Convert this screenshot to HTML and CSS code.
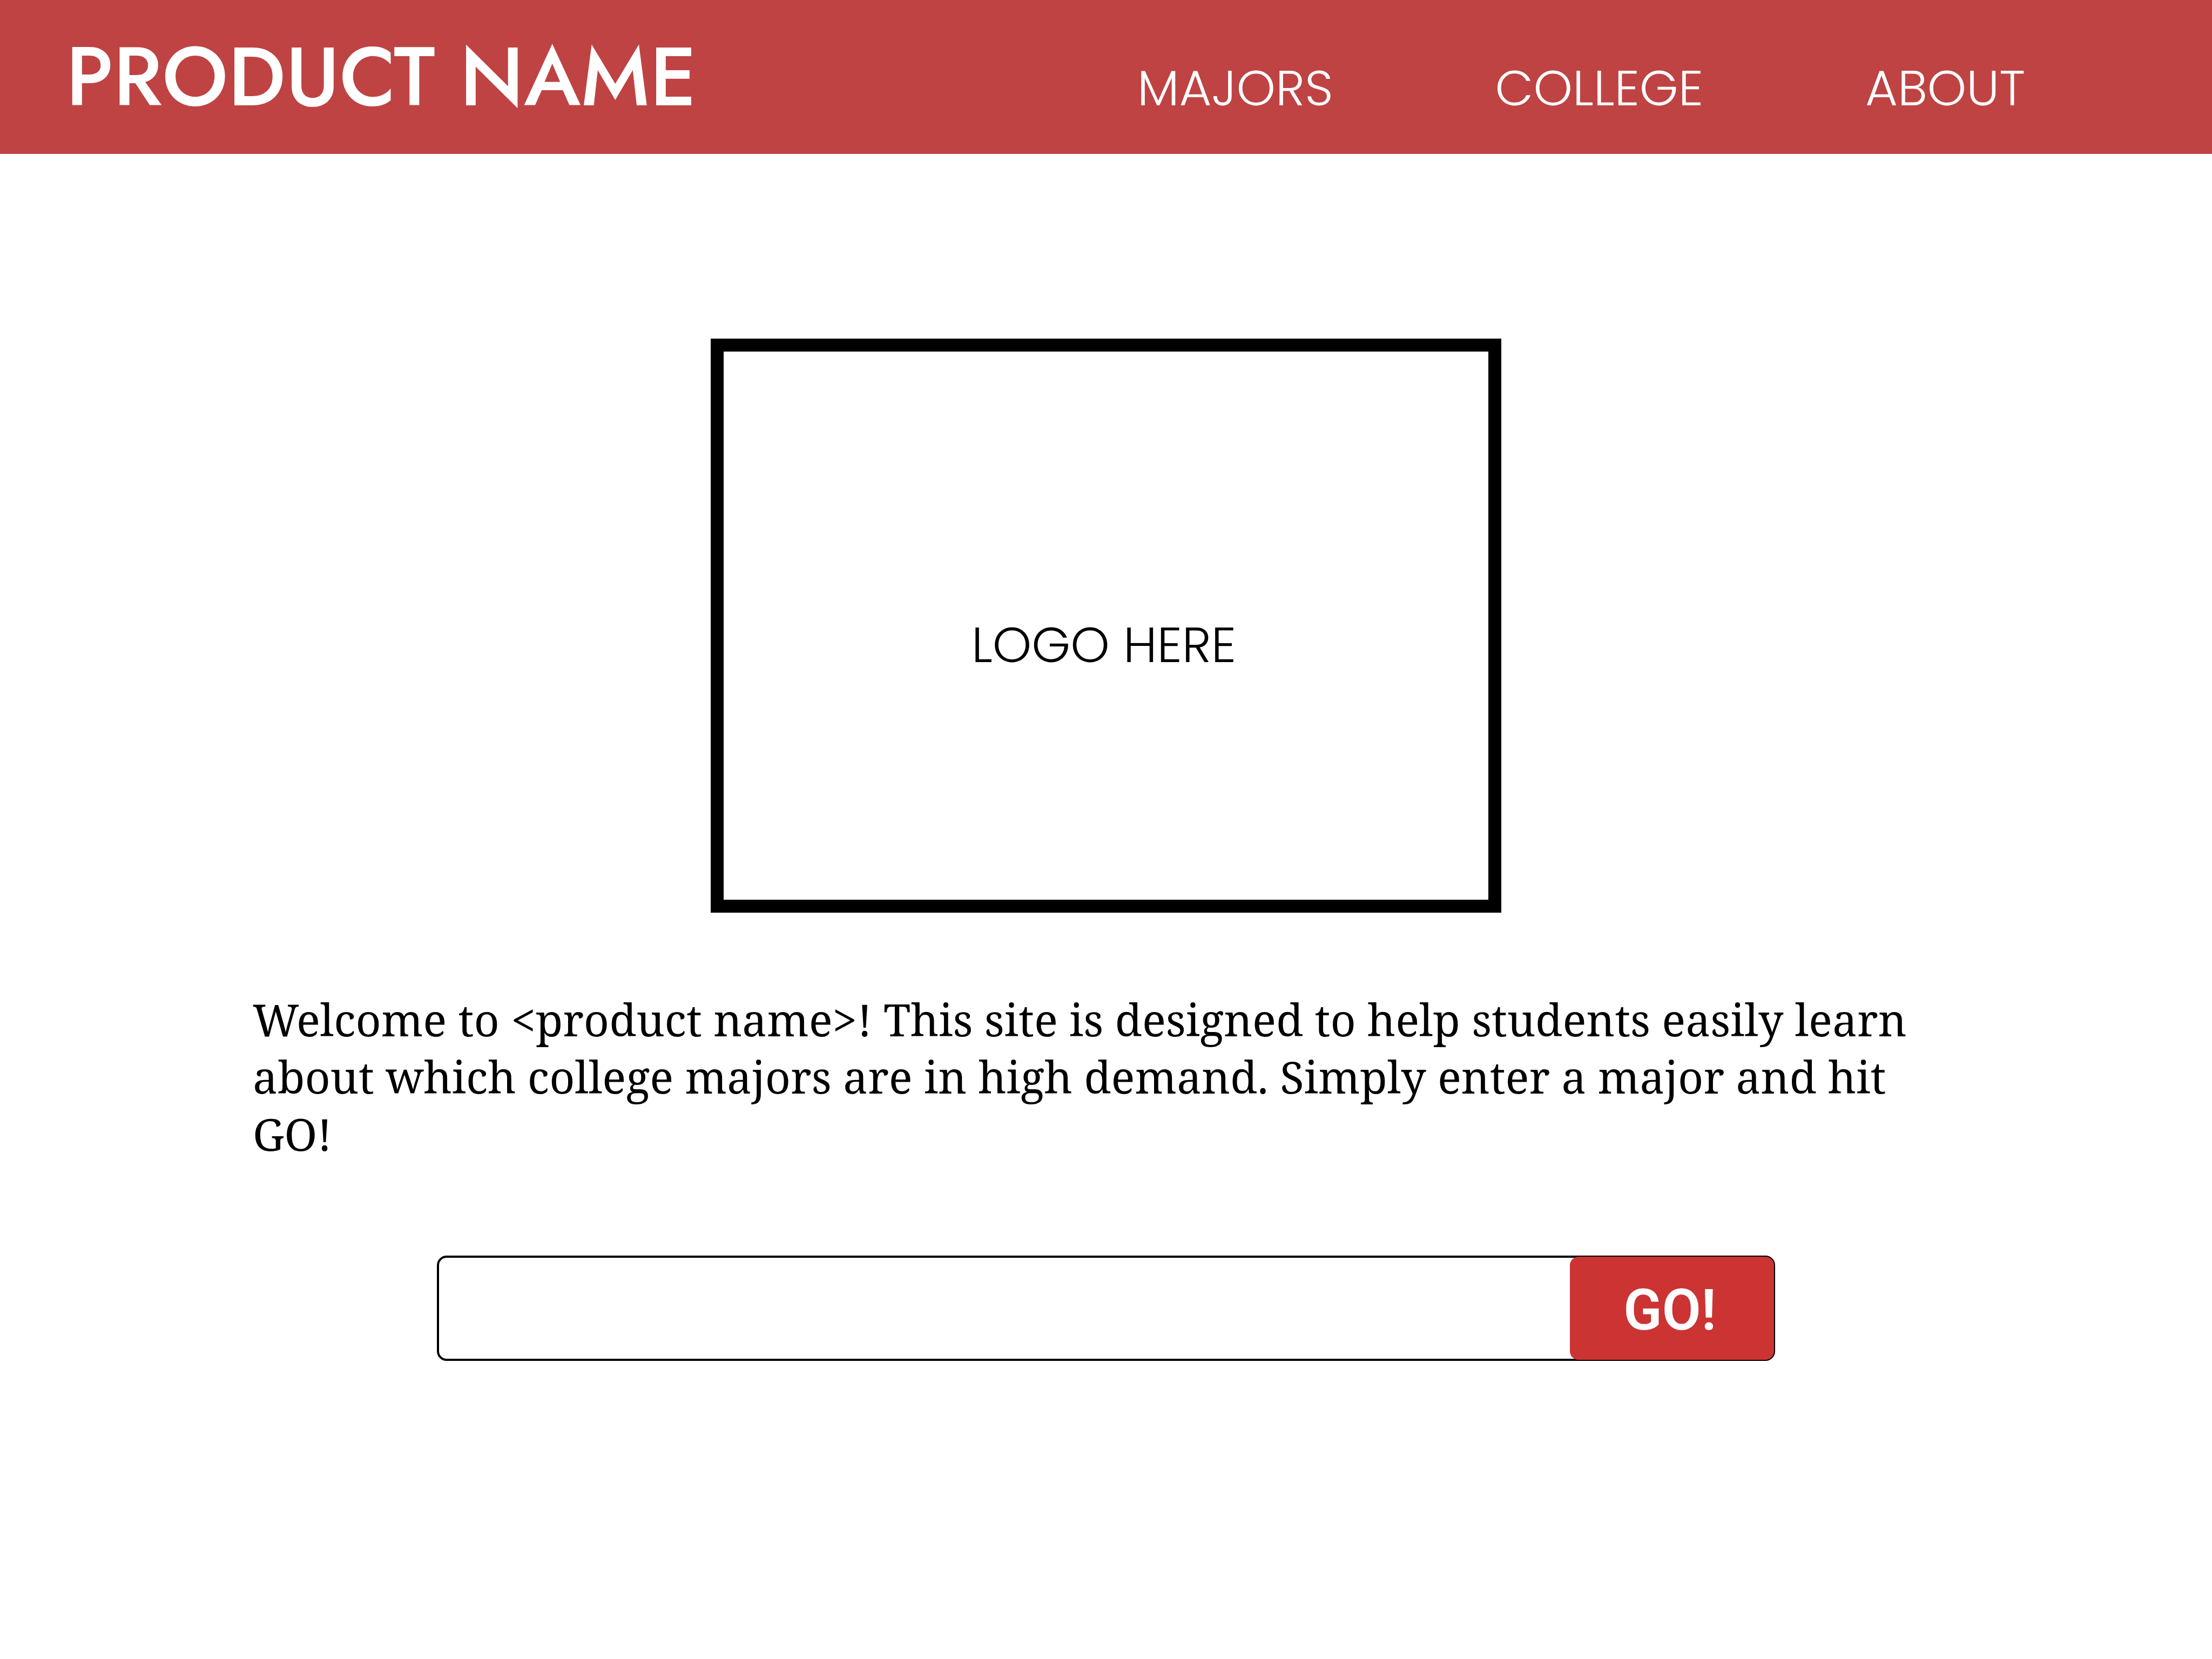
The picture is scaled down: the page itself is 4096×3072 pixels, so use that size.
FILE: index.html
```html
<!DOCTYPE html>
<html lang="en">
<head>
  <meta charset="utf-8">
  <meta name="viewport" content="width=device-width, initial-scale=1">
  <title>Product Name</title>
  <link rel="stylesheet" href="styles.css">
</head>
<body>
  <header class="site-header">
    <h1 class="brand">PRODUCT NAME</h1>
    <nav class="site-nav">
      <a class="nav-link" href="#majors">MAJORS</a>
      <a class="nav-link" href="#college">COLLEGE</a>
      <a class="nav-link" href="#about">ABOUT</a>
    </nav>
  </header>
  <main class="home">
    <div class="logo-box">LOGO HERE</div>
    <p class="intro">Welcome to &lt;product name&gt;! This site is designed to help students easily learn about which college majors are in high demand. Simply enter a major and hit GO!</p>
    <form class="search" action="#" role="search">
      <input class="search-input" type="text" name="major" aria-label="Major">
      <button class="search-button" type="submit">GO!</button>
    </form>
  </main>
</body>
</html>
```
FILE: styles.css
```css
* {
  box-sizing: border-box;
}

body {
  margin: 0;
  background: #fff;
  color: #000;
  font-family: Poppins, Lato, sans-serif;
}

/* Header */
.site-header {
  display: flex;
  align-items: baseline;
  justify-content: space-between;
  min-height: 285px;
  padding: 65px 346px 0 122px;
  background: #bf4343;
  color: #fff;
}

.brand {
  margin: 0;
  font-family: Jost, Lato, sans-serif;
  font-size: 152px;
  font-weight: 500;
  line-height: 154px;
}

.site-nav {
  display: flex;
  gap: 300px;
}

.nav-link {
  color: inherit;
  font-size: 92px;
  font-weight: 300;
  line-height: 120px;
  text-decoration: none;
}

/* Home page */
.home {
  display: flex;
  flex-direction: column;
  align-items: center;
  padding: 342px 468px 0;
}

.logo-box {
  display: flex;
  align-items: center;
  justify-content: center;
  width: 100%;
  max-width: 1464px;
  height: 1063px;
  padding: 70px 8px 0 0;
  border: 24px solid #000;
  font-size: 92px;
  font-weight: 300;
  line-height: 120px;
}

.intro {
  align-self: flex-start;
  max-width: 3110px;
  margin: 144px 0 173px;
  font-family: "Noto Serif", "DejaVu Serif", serif;
  font-size: 82px;
  line-height: 106px;
}

.search {
  display: flex;
  width: 100%;
  max-width: 2478px;
  height: 195px;
  border: 4px solid #000;
  border-radius: 18px;
}

.search-input {
  flex: 1;
  min-width: 0;
  padding: 0 32px;
  border: 0;
  outline: 0;
  background: transparent;
  font-family: inherit;
  font-size: 92px;
}

/* The button covers the inner half of the field's outline */
.search-button {
  width: 378px;
  margin: -2px -2px -2px 0;
  padding: 8px 8px 0 0;
  border: 0;
  border-radius: 16px;
  background: #cc3333;
  color: #fff;
  font-family: Roboto, "Liberation Sans", sans-serif;
  font-size: 105px;
  font-weight: 600;
}
```
